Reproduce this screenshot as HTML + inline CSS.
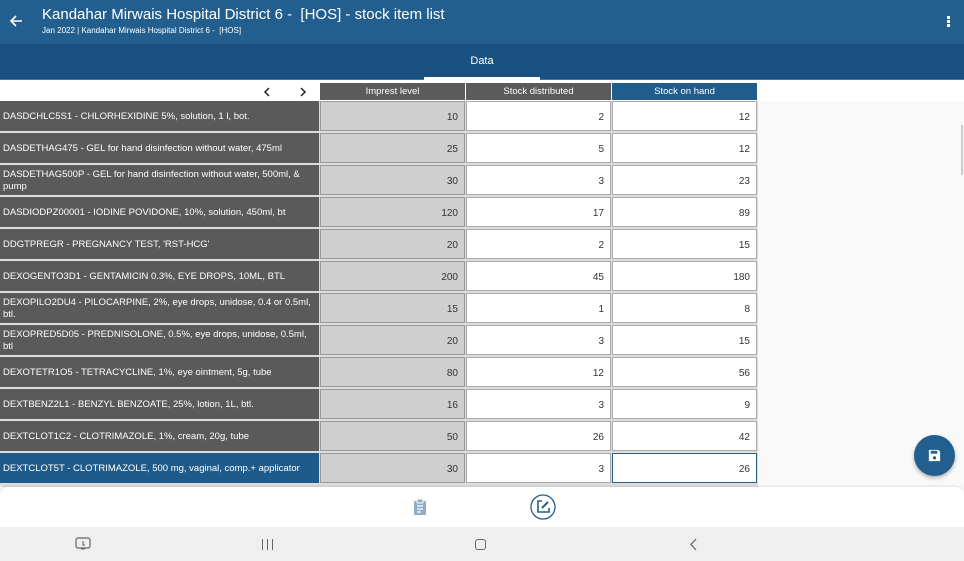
<!DOCTYPE html>
<html><head><meta charset="utf-8"><style>
*{margin:0;padding:0;box-sizing:border-box}
body{width:964px;height:561px;overflow:hidden;background:#f9f9f9;font-family:"Liberation Sans",sans-serif;position:relative}
.hdr{position:absolute;left:0;top:0;width:964px;height:44px;background:#225f8f}
.tabs{position:absolute;left:0;top:44px;width:964px;height:36px;background:#1a5080;border-bottom:1px solid #3d78a8}
.title{position:absolute;left:42px;top:6px;color:#fff;font-size:15px}
.sub{position:absolute;left:42px;top:26px;color:#fff;font-size:8px}
.top{position:absolute;left:0;top:80px;width:964px;height:21px;background:#fff}
.row{position:absolute;left:0;width:758px;height:30px}
.lab{position:absolute;left:0;top:0;width:319px;height:30px;background:#5a5a5a;color:#fff;font-size:9.5px;padding:2px 3px 0;display:flex;align-items:center;line-height:12px}
.c{position:absolute;top:0;height:30px;width:145px;background:#fff;border:1px solid #aaa;font-size:10px;color:#333;text-align:right;padding:2px 6px 0;line-height:28px}
.c1{left:320px;background:#cfcfcf;border-color:#999}
.c2{left:466px}.c3{left:612px}
.th{position:absolute;top:83px;height:17px;width:145px;background:#5b5b5b;color:#fff;font-size:9.5px;text-align:center;line-height:18px}
</style></head><body>
<div class="hdr">
<svg style="position:absolute;left:8px;top:13px" width="16" height="16" viewBox="0 0 16 16"><path d="M14 8H3M8 3L3 8l5 5" stroke="#fff" stroke-width="1.6" fill="none"/></svg>
<div class="title">Kandahar Mirwais Hospital District 6 -&nbsp; [HOS] - stock item list</div>
<div class="sub">Jan 2022 | Kandahar Mirwais Hospital District 6 -&nbsp; [HOS]</div>
<div style="position:absolute;left:947px;top:16px;width:3px;height:3px;background:#fff;box-shadow:0 4px #fff,0 8px #fff"></div>
</div>
<div class="tabs"><div style="position:absolute;left:424px;width:116px;top:11px;text-align:center;color:#fff;font-size:11px">Data</div><div style="position:absolute;left:424px;width:116px;top:33px;height:3px;background:#fff"></div></div>
<div class="top"></div>
<svg style="position:absolute;left:263px;top:87px" width="8" height="10" viewBox="0 0 8 10"><path d="M6 1L2 5l4 4" stroke="#222" stroke-width="1.5" fill="none"/></svg>
<svg style="position:absolute;left:299px;top:87px" width="8" height="10" viewBox="0 0 8 10"><path d="M2 1l4 4-4 4" stroke="#222" stroke-width="1.5" fill="none"/></svg>
<div style="position:absolute;left:0;top:101px;width:758px;height:386px;background:#ddd"></div>
<div class="th" style="left:320px">Imprest level</div>
<div class="th" style="left:466px">Stock distributed</div>
<div class="th" style="left:612px;background:#205d8c">Stock on hand</div>

<div class="row" style="top:101px"><div class="lab">DASDCHLC5S1 - CHLORHEXIDINE 5%, solution, 1 l, bot.</div><div class="c c1">10</div><div class="c c2">2</div><div class="c c3">12</div></div>
<div class="row" style="top:133px"><div class="lab">DASDETHAG475 - GEL for hand disinfection without water, 475ml</div><div class="c c1">25</div><div class="c c2">5</div><div class="c c3">12</div></div>
<div class="row" style="top:165px"><div class="lab">DASDETHAG500P - GEL for hand disinfection without water, 500ml, &amp; pump</div><div class="c c1">30</div><div class="c c2">3</div><div class="c c3">23</div></div>
<div class="row" style="top:197px"><div class="lab">DASDIODPZ00001 - IODINE POVIDONE, 10%, solution, 450ml, bt</div><div class="c c1">120</div><div class="c c2">17</div><div class="c c3">89</div></div>
<div class="row" style="top:229px"><div class="lab">DDGTPREGR - PREGNANCY TEST, 'RST-HCG'</div><div class="c c1">20</div><div class="c c2">2</div><div class="c c3">15</div></div>
<div class="row" style="top:261px"><div class="lab">DEXOGENTO3D1 - GENTAMICIN 0.3%, EYE DROPS, 10ML, BTL</div><div class="c c1">200</div><div class="c c2">45</div><div class="c c3">180</div></div>
<div class="row" style="top:293px"><div class="lab">DEXOPILO2DU4 - PILOCARPINE, 2%, eye drops, unidose, 0.4 or 0.5ml, btl.</div><div class="c c1">15</div><div class="c c2">1</div><div class="c c3">8</div></div>
<div class="row" style="top:325px"><div class="lab">DEXOPRED5D05 - PREDNISOLONE, 0.5%, eye drops, unidose, 0.5ml, btl</div><div class="c c1">20</div><div class="c c2">3</div><div class="c c3">15</div></div>
<div class="row" style="top:357px"><div class="lab">DEXOTETR1O5 - TETRACYCLINE, 1%, eye ointment, 5g, tube</div><div class="c c1">80</div><div class="c c2">12</div><div class="c c3">56</div></div>
<div class="row" style="top:389px"><div class="lab">DEXTBENZ2L1 - BENZYL BENZOATE, 25%, lotion, 1L, btl.</div><div class="c c1">16</div><div class="c c2">3</div><div class="c c3">9</div></div>
<div class="row" style="top:421px"><div class="lab">DEXTCLOT1C2 - CLOTRIMAZOLE, 1%, cream, 20g, tube</div><div class="c c1">50</div><div class="c c2">26</div><div class="c c3">42</div></div>
<div class="row" style="top:453px"><div class="lab" style="background:#1f5b8a">DEXTCLOT5T - CLOTRIMAZOLE, 500 mg, vaginal, comp.+ applicator</div><div class="c c1">30</div><div class="c c2">3</div><div class="c c3" style="border:1px solid #2b5f8a">26</div></div>

<div style="position:absolute;left:961px;top:125px;width:2px;height:50px;background:#ccc"></div>
<div style="position:absolute;left:914px;top:435px;width:41px;height:41px;border-radius:50%;background:#225f8f;box-shadow:0 2px 4px rgba(0,0,0,.3)">
<svg style="position:absolute;left:13px;top:13px" width="15" height="15" viewBox="0 0 16 16"><path d="M2 2h10l2 2v10H2z" fill="#fff"/><rect x="4" y="3" width="7" height="3" fill="#225f8f"/><circle cx="8" cy="10.5" r="1.7" fill="#225f8f"/></svg></div>

<div style="position:absolute;left:0;top:487px;width:964px;height:40px;background:#fff;border-radius:8px 8px 0 0;box-shadow:0 -1px 2px rgba(0,0,0,.1)">
<svg style="position:absolute;left:413px;top:12px" width="14" height="16" viewBox="0 0 14 16"><rect x="1" y="2" width="12" height="14" rx="1" fill="#90aec6"/><rect x="4" y="0" width="6" height="4" rx="1" fill="#90aec6" stroke="#fff" stroke-width="1"/><path d="M4 7h6M4 10h6M4 13h4" stroke="#fff" stroke-width="1.2"/></svg>
<svg style="position:absolute;left:530px;top:7px" width="26" height="26" viewBox="0 0 26 26"><circle cx="13" cy="13" r="12" fill="none" stroke="#225f8f" stroke-width="1.3"/><path d="M12 7H8v11h11v-4" fill="none" stroke="#225f8f" stroke-width="1.6"/><path d="M12 14l6-6" stroke="#225f8f" stroke-width="2"/></svg>
</div>
<div style="position:absolute;left:0;top:527px;width:964px;height:34px;background:#efefef">
<svg style="position:absolute;left:75px;top:10px" width="16" height="14" viewBox="0 0 16 14"><rect x="1" y="1" width="14" height="10" rx="2" fill="none" stroke="#666" stroke-width="1.2"/><path d="M6 12h4M8 4v4h2" stroke="#666" stroke-width="1.1" fill="none"/></svg>
<div style="position:absolute;left:262px;top:12px;width:11px;height:11px;border-left:1.3px solid #666;border-right:1.3px solid #666"><div style="margin-left:4px;width:1.3px;height:11px;background:#666"></div></div>
<div style="position:absolute;left:475px;top:12px;width:11px;height:11px;border:1.3px solid #666;border-radius:3px"></div>
<svg style="position:absolute;left:688px;top:11px" width="10" height="13" viewBox="0 0 10 13"><path d="M8 1L3 6.5 8 12" stroke="#666" stroke-width="1.3" fill="none"/></svg>
</div>
</body></html>
